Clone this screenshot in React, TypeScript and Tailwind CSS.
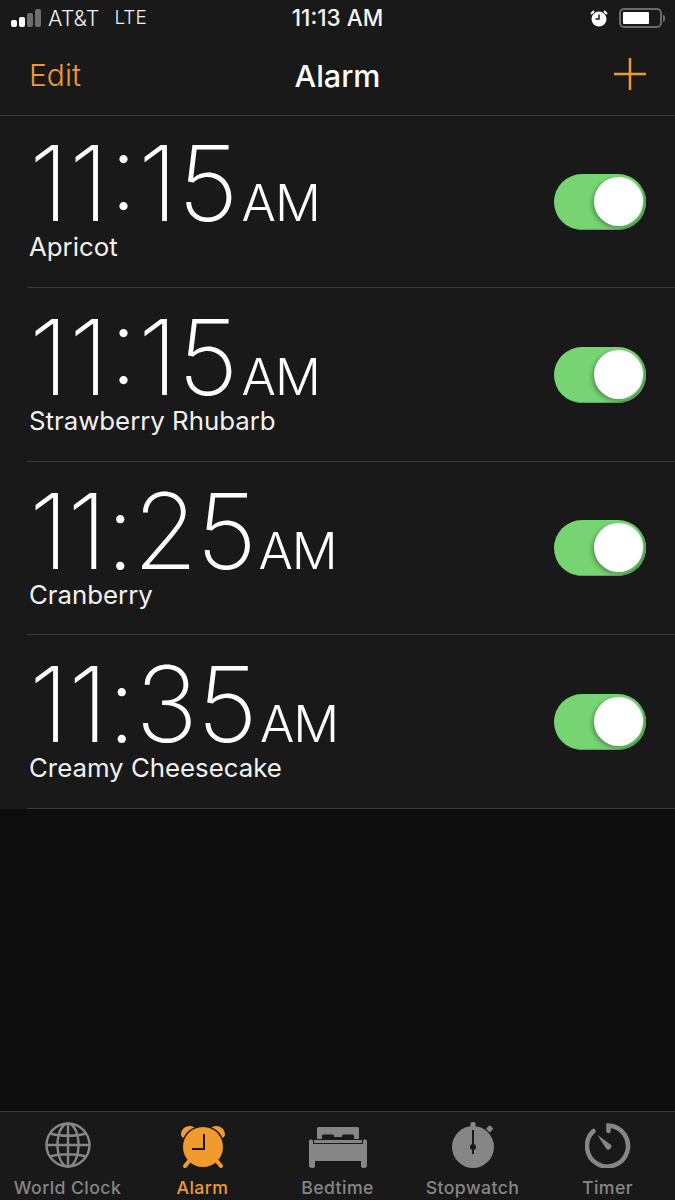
const alarms = [
  { time: '11:15', label: 'Apricot', spacing: 'tracking-[0px]' },
  { time: '11:15', label: 'Strawberry Rhubarb', spacing: 'tracking-[0px]' },
  { time: '11:25', label: 'Cranberry', spacing: 'tracking-[-1.6px]' },
  { time: '11:35', label: 'Creamy Cheesecake', spacing: 'tracking-[-0.8px]' },
];

function Toggle() {
  return (
    <div className="relative h-[56px] w-[92px] rounded-full bg-[#76d572] shadow-[inset_-2px_-1px_0_#5aa857]">
      <div className="absolute right-[3px] top-[3px] h-[49px] w-[49px] rounded-full bg-white shadow-[-2px_2px_4px_rgba(0,0,0,0.3)]" />
    </div>
  );
}

function AlarmRow({ time, label, spacing, first }: { time: string; label: string; spacing: string; first: boolean }) {
  return (
    <div className={`relative flex items-center justify-between px-[29px] ${first ? 'h-[172px]' : 'h-[173.67px]'}`}>
      <div className="flex h-full flex-col">
        <div className={`flex h-[80px] items-baseline text-white ${first ? 'mt-[27px]' : 'mt-[29px]'}`}>
          <span className={`text-[105px] font-extralight leading-[80px] ${spacing}`}>{time}</span>
          <span className="ml-[3px] text-[51px] font-light leading-none tracking-[-1px]">AM</span>
        </div>
        <div className="mt-[8px] text-[25.8px] leading-[32px] text-[#f2f2f2]">{label}</div>
      </div>
      <Toggle />
      <div className="absolute bottom-0 left-[27px] right-0 h-px bg-[#3a3a3a]" />
    </div>
  );
}

function Globe() {
  return (
    <svg viewBox="0 0 46 46" className="h-[46px] w-[46px]" fill="none" stroke="#868686" strokeWidth="2.4">
      <circle cx="23" cy="23" r="21.5" />
      <ellipse cx="23" cy="23" rx="10.5" ry="21.5" />
      <path d="M23 1.5v43M1.5 23h43M5 11.5c10 3 26 3 36 0M5 34.5c10-3 26-3 36 0" />
    </svg>
  );
}

function AlarmClock() {
  return (
    <svg viewBox="0 0 46 46" className="h-[46px] w-[46px]">
      <circle cx="23" cy="25" r="20" fill="#f19a2e" />
      <path d="M1 12.5C1 6 8 1.5 14.5 5.5 9 7.5 5.5 11 3.5 16 2 15 1 14 1 12.5zM45 12.5C45 6 38 1.5 31.5 5.5 37 7.5 40.5 11 42.5 16 44 15 45 14 45 12.5z" fill="#f19a2e" />
      <path d="M10 38l-5 6M36 38l5 6" stroke="#f19a2e" strokeWidth="4" strokeLinecap="round" />
      <path d="M24 12v15h-12" fill="none" stroke="#191919" strokeWidth="2" />
    </svg>
  );
}

function Bed() {
  return (
    <svg viewBox="0 0 58 46" className="h-[46px] w-[58px]" fill="#868686">
      <path d="M8 6.5C8 5.5 9 5 10 5h38c1 0 2 .5 2 1.5V17h-5v-3c0-1-1-1.5-2-1.5h-8c-1 0-2 .5-2 1.5v1h-8v-1c0-1-1-1.5-2-1.5h-8c-1 0-2 .5-2 1.5v3H8z" />
      <path d="M5 18h48v3H5z" />
      <path d="M0 19c0-2 4-2 4 0v3h50v-3c0-2 4-2 4 0v25c0 2-4 2-4 2-1 0-2-1-2-2v-5H6v5c0 1-1 2-2 2 0 0-4 0-4-2z" />
    </svg>
  );
}

function Stopwatch() {
  return (
    <svg viewBox="0 0 46 46" className="h-[46px] w-[46px]">
      <rect x="20.5" y="0" width="5" height="6" rx="1.5" fill="#868686" />
      <circle cx="23" cy="25" r="21" fill="#868686" />
      <rect x="37" y="4" width="5.5" height="5.5" rx="1.5" transform="rotate(45 39.7 6.7)" fill="#868686" />
      <path d="M23 8v24" stroke="#191919" strokeWidth="2" />
      <circle cx="23" cy="25" r="3" fill="#191919" />
    </svg>
  );
}

function TimerIcon() {
  return (
    <svg viewBox="0 0 46 46" className="h-[46px] w-[46px]" fill="none">
      <path d="M23.5 9V3.5A20.5 20.5 0 1 1 8.5 9" stroke="#868686" strokeWidth="4.5" strokeLinecap="round" />
      <path d="M12.5 13l13 9.5a3 3 0 0 1-4.5 4z" fill="#868686" />
    </svg>
  );
}

function Tab({ icon, label, active }: { icon: React.ReactNode; label: string; active?: boolean }) {
  return (
    <div className="flex w-[135px] flex-col items-center">
      <div className="flex h-[48px] items-center">{icon}</div>
      <div className={`mt-[8px] text-[17.7px] font-medium leading-[22px] tracking-[0.4px] ${active ? 'text-[#f19a2e]' : 'text-[#868686]'}`}>
        {label}
      </div>
    </div>
  );
}

export default function App() {
  return (
    <div className="flex h-[1200px] w-[675px] flex-col overflow-hidden bg-[#0d0d0d] font-['Inter',sans-serif]">
      {/* Status bar */}
      <div className="relative flex h-[36px] items-center justify-between bg-[#191919] px-[10px]">
        <div className="flex items-center">
          <div className="flex items-end gap-[2px] pl-[1px]">
            <div className="h-[7px] w-[6px] rounded-[2px] bg-white" />
            <div className="h-[10px] w-[6px] rounded-[2px] bg-white" />
            <div className="h-[14px] w-[6px] rounded-[2px] bg-[#6e6e6e]" />
            <div className="h-[18px] w-[6px] rounded-[2px] bg-[#6e6e6e]" />
          </div>
          <span className="ml-[7px] text-[21.5px] font-light text-[#f0f0f0]">AT&amp;T</span>
          <span className="ml-[15px] text-[19px] font-light text-[#f0f0f0]">LTE</span>
        </div>
        <div className="absolute inset-x-0 text-center text-[22.5px] font-medium text-[#f5f5f5]">11:13 AM</div>
        <div className="flex items-center">
          <svg viewBox="0 0 18 18" className="h-[18px] w-[18px]">
            <circle cx="9" cy="10" r="7.5" fill="#fff" />
            <path d="M1 5l3-3M17 5l-3-3" stroke="#fff" strokeWidth="2" />
            <path d="M9 5.5V10H5.5" fill="none" stroke="#191919" strokeWidth="1.5" />
          </svg>
          <div className="ml-[11px] flex h-[20px] w-[43px] items-center rounded-[5px] border-2 border-[#6a6a6a] p-[2px]">
            <div className="h-full w-[26px] rounded-[1px] bg-white" />
          </div>
          <div className="ml-[1px] h-[7px] w-[2px] rounded-r-sm bg-[#6a6a6a]" />
        </div>
      </div>

      {/* Nav */}
      <div className="relative flex h-[80px] items-center justify-between border-b border-[#3a3a3a] bg-[#191919] pl-[29px] pr-[28px]">
        <span className="text-[30px] font-light text-[#f19a2e]">Edit</span>
        <span className="absolute inset-x-0 top-[18px] text-center text-[30.5px] font-medium leading-[44px] text-white">Alarm</span>
        <svg viewBox="0 0 34 34" className="mb-[4px] h-[34px] w-[34px]" stroke="#f19a2e" strokeWidth="2.5">
          <path d="M17 1v32M1 17h32" />
        </svg>
      </div>

      {/* Alarm list */}
      <div className="bg-[#191919]">
        {alarms.map((alarm, i) => (
          <AlarmRow key={i} time={alarm.time} label={alarm.label} spacing={alarm.spacing} first={i === 0} />
        ))}
      </div>

      <div className="flex-1" />

      {/* Tab bar */}
      <div className="flex h-[89px] items-start border-t border-[#3a3a3a] bg-[#191919] pt-[9px]">
        <Tab icon={<Globe />} label="World Clock" />
        <Tab icon={<AlarmClock />} label="Alarm" active />
        <Tab icon={<Bed />} label="Bedtime" />
        <Tab icon={<Stopwatch />} label="Stopwatch" />
        <Tab icon={<TimerIcon />} label="Timer" />
      </div>
    </div>
  );
}
